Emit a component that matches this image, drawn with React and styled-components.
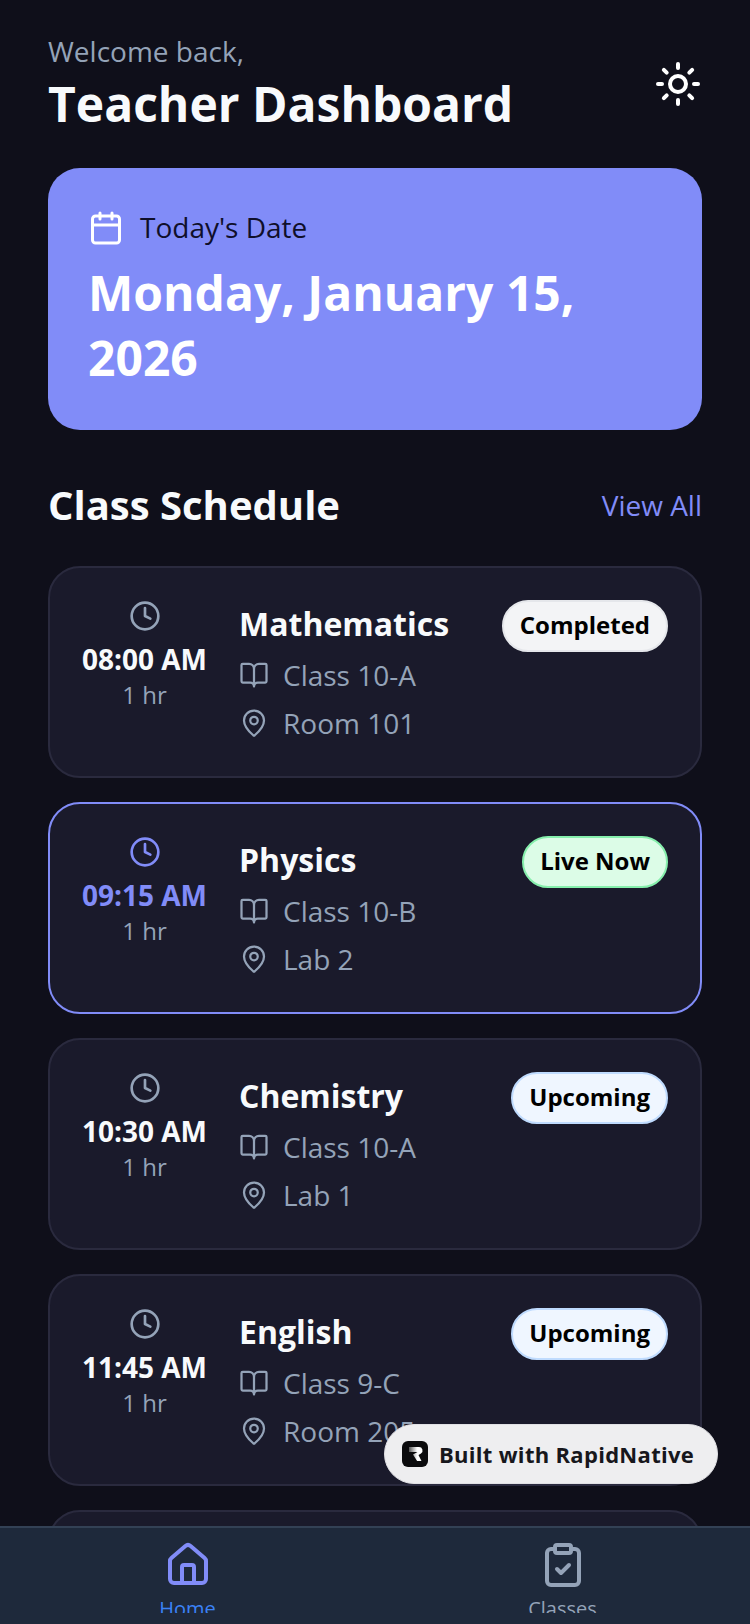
import React from "react";
import styled, { createGlobalStyle } from "styled-components";
import { Sun, Calendar, Clock, BookOpen, MapPin, House, ClipboardCheck } from "lucide-react";

const GlobalStyle = createGlobalStyle`
  html, body {
    margin: 0;
    padding: 0;
    background: #0f0f1a;
  }
  * {
    box-sizing: border-box;
  }
  svg {
    flex: none;
  }
`;

const Screen = styled.div`
  position: relative;
  width: 750px;
  height: 1624px;
  display: flex;
  flex-direction: column;
  overflow: hidden;
  background: #0f0f1a;
  font-family: "Open Sans", "Noto Sans", sans-serif;
`;

const Scroll = styled.main`
  flex: 1;
  min-height: 0;
  overflow: hidden;
  padding: 31px 48px 0;
`;

const Header = styled.header`
  display: flex;
  align-items: center;
  justify-content: space-between;
  margin-bottom: 32px;
`;

const Welcome = styled.div`
  font-size: 28px;
  line-height: 40px;
  color: #94a3b8;
`;

const Title = styled.h1`
  margin: 1px 0 0;
  font-size: 48px;
  line-height: 64px;
  font-weight: 700;
  color: #f8fafc;
`;

const ThemeButton = styled.div`
  display: flex;
  color: #ffffff;
`;

const DateCard = styled.section`
  background: #818cf8;
  border-radius: 32px;
  padding: 39px 40px 40px;
  margin-bottom: 48px;
`;

const DateLabel = styled.div`
  display: flex;
  align-items: center;
  gap: 16px;
  font-size: 28px;
  line-height: 40px;
  color: #0f0f2a;

  svg {
    color: #ffffff;
    margin-top: 2px;
  }
`;

const DateText = styled.div`
  margin-top: 13px;
  font-size: 48px;
  line-height: 65px;
  font-weight: 700;
  color: #ffffff;
`;

const SectionHead = styled.div`
  display: flex;
  align-items: center;
  justify-content: space-between;
  margin-bottom: 34px;
`;

const SectionTitle = styled.h2`
  margin: 0;
  font-size: 40px;
  line-height: 54px;
  font-weight: 700;
  color: #f8fafc;
`;

const ViewAll = styled.span`
  font-size: 28px;
  color: #818cf8;
`;

const List = styled.div`
  display: flex;
  flex-direction: column;
  gap: 24px;
`;

const Card = styled.article`
  display: flex;
  align-items: flex-start;
  gap: 32px;
  height: 212px;
  padding: 30px 32px;
  border-radius: 32px;
  background: #1a1a2b;
  border: 2px solid ${(p) => (p.$active ? "#818cf8" : "#2a2a3e")};
`;

const TimeCol = styled.div`
  display: flex;
  flex-direction: column;
  align-items: center;
  width: 125px;
  padding-top: 2px;
  color: ${(p) => (p.$active ? "#818cf8" : "#94a3b8")};
`;

const Time = styled.div`
  margin-top: 8px;
  font-size: 28px;
  line-height: 38px;
  font-weight: 700;
  white-space: nowrap;
  color: ${(p) => (p.$active ? "#818cf8" : "#f8fafc")};
`;

const Duration = styled.div`
  font-size: 24px;
  line-height: 34px;
  color: #94a3b8;
`;

const Info = styled.div`
  flex: 1;
  min-width: 0;
`;

const InfoTop = styled.div`
  display: flex;
  align-items: flex-start;
  justify-content: space-between;
`;

const ClassName = styled.h3`
  margin: 0;
  padding-top: 4px;
  font-size: 32px;
  line-height: 44px;
  font-weight: 700;
  color: #f8fafc;
`;

const Badge = styled.span`
  height: 52px;
  margin-top: 2px;
  display: flex;
  align-items: center;
  padding: 0 16px 4px;
  border-radius: 26px;
  border: 2px solid ${(p) => p.$border};
  background: ${(p) => p.$bg};
  font-size: 24px;
  font-weight: 700;
  color: #000000;
`;

const MetaList = styled.div`
  display: flex;
  flex-direction: column;
  gap: 8px;
  margin-top: 3px;
`;

const Meta = styled.div`
  display: flex;
  align-items: center;
  gap: 14px;
  font-size: 28px;
  line-height: 40px;
  color: #94a3b8;
`;

const Nav = styled.nav`
  flex: none;
  height: 98px;
  display: flex;
  background: #1e293b;
  border-top: 2px solid #334155;
`;

const Tab = styled.div`
  flex: 1;
  height: 85px;
  padding-top: 13px;
  overflow: hidden;
  display: flex;
  flex-direction: column;
  align-items: center;
  color: ${(p) => (p.$active ? "#818cf8" : "#94a3b8")};
`;

const TabLabel = styled.span`
  margin-top: 6px;
  font-size: 20px;
  line-height: 28px;
  color: ${(p) => (p.$active ? "#3b82f6" : "#94a3b8")};
`;

const BuiltWith = styled.div`
  position: absolute;
  left: 384px;
  top: 1424px;
  width: 334px;
  height: 60px;
  display: flex;
  align-items: center;
  gap: 11px;
  padding-left: 17px;
  border-radius: 30px;
  background: #eeeef0;
  border: 1px solid #e0e0e4;
  font-size: 22px;
  font-weight: 700;
  letter-spacing: 0.3px;
  color: #17171c;
`;

const classes = [
  { name: "Mathematics", time: "08:00 AM", group: "Class 10-A", room: "Room 101", status: "Completed" },
  { name: "Physics", time: "09:15 AM", group: "Class 10-B", room: "Lab 2", status: "Live Now", active: true },
  { name: "Chemistry", time: "10:30 AM", group: "Class 10-A", room: "Lab 1", status: "Upcoming" },
  { name: "English", time: "11:45 AM", group: "Class 9-C", room: "Room 205", status: "Upcoming" },
  { name: "History", time: "01:00 PM", group: "Class 9-A", room: "Room 110", status: "Upcoming" },
];

const badgeColors = {
  Completed: { bg: "#f3f4f6", border: "#e5e7eb" },
  "Live Now": { bg: "#dcfce7", border: "#86efac" },
  Upcoming: { bg: "#eff6ff", border: "#bfdbfe" },
};

const RapidLogo = () => (
  <svg width="26" height="26" viewBox="0 0 26 26">
    <defs>
      <linearGradient id="rn-fade" x1="0" x2="1" y1="0" y2="0">
        <stop offset="0" stopColor="#555" />
        <stop offset="0.6" stopColor="#fff" />
      </linearGradient>
    </defs>
    <rect width="26" height="26" rx="6" fill="#0b0b0d" />
    <path d="M7 6h10a3.5 3.5 0 0 1 2 6.4L16.500 14l3 6h-4.400L11 13.500l4.500-2.500H7z" fill="url(#rn-fade)" />
  </svg>
);

const ClassCard = ({ item }) => {
  const colors = badgeColors[item.status];
  return (
    <Card $active={item.active}>
      <TimeCol $active={item.active}>
        <Clock size={32} strokeWidth={2} />
        <Time $active={item.active}>{item.time}</Time>
        <Duration>1 hr</Duration>
      </TimeCol>
      <Info>
        <InfoTop>
          <ClassName>{item.name}</ClassName>
          <Badge $bg={colors.bg} $border={colors.border}>{item.status}</Badge>
        </InfoTop>
        <MetaList>
          <Meta>
            <BookOpen size={30} strokeWidth={1.8} />
            {item.group}
          </Meta>
          <Meta>
            <MapPin size={30} strokeWidth={1.8} />
            {item.room}
          </Meta>
        </MetaList>
      </Info>
    </Card>
  );
};

const App = () => {
  return (
    <Screen>
      <GlobalStyle />
      <Scroll>
        <Header>
          <div>
            <Welcome>Welcome back,</Welcome>
            <Title>Teacher Dashboard</Title>
          </div>
          <ThemeButton>
            <Sun size={48} strokeWidth={2} />
          </ThemeButton>
        </Header>

        <DateCard>
          <DateLabel>
            <Calendar size={36} strokeWidth={2} />
            Today's Date
          </DateLabel>
          <DateText>Monday, January 15, 2026</DateText>
        </DateCard>

        <SectionHead>
          <SectionTitle>Class Schedule</SectionTitle>
          <ViewAll>View All</ViewAll>
        </SectionHead>

        <List>
          {classes.map((item) => (
            <ClassCard key={item.time} item={item} />
          ))}
        </List>
      </Scroll>

      <Nav>
        <Tab $active>
          <House size={48} strokeWidth={2} />
          <TabLabel $active>Home</TabLabel>
        </Tab>
        <Tab>
          <ClipboardCheck size={48} strokeWidth={2} />
          <TabLabel>Classes</TabLabel>
        </Tab>
      </Nav>

      <BuiltWith>
        <RapidLogo />
        Built with RapidNative
      </BuiltWith>
    </Screen>
  );
};

export default App;
